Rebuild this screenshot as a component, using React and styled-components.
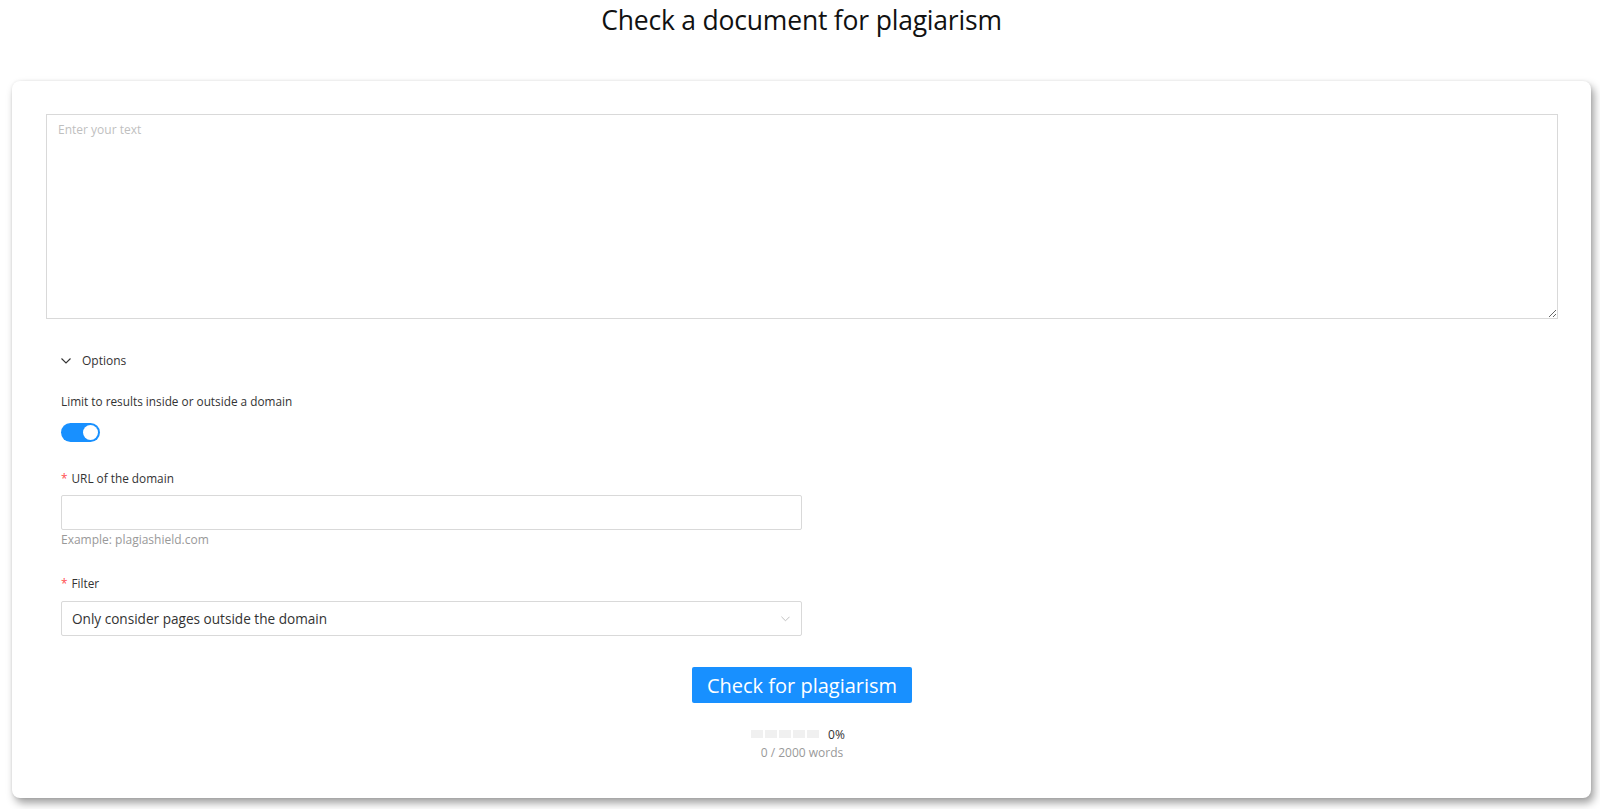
import React, { useState } from 'react';
import styled, { createGlobalStyle } from 'styled-components';

const GlobalStyle = createGlobalStyle`
  html, body {
    margin: 0;
    padding: 0;
    background: #ffffff;
    overflow: hidden;
    font-family: "Open Sans", "Noto Sans", "Liberation Sans", sans-serif;
  }
`;

const Page = styled.div`
  width: 100%;
  height: 809px;
  padding-left: 12px;
  box-sizing: border-box;
  overflow: hidden;
`;

const Title = styled.h1`
  margin: 0;
  box-sizing: border-box;
  width: 1579px;
  height: 81px;
  padding-top: 2px;
  text-align: center;
  font-size: 26.5px;
  line-height: 36px;
  font-weight: 500;
  color: #111;
  letter-spacing: -0.2px;
`;

const Card = styled.div`
  width: 1579px;
  height: 717px;
  background: #fff;
  border-radius: 8px;
  box-shadow: 3px 5px 8px rgba(0, 0, 0, 0.38), 0 0 3px rgba(0, 0, 0, 0.08);
  padding: 33px 33px 0 34px;
  box-sizing: border-box;
`;

const TextArea = styled.textarea`
  display: block;
  width: 100%;
  height: 205px;
  box-sizing: border-box;
  border: 1px solid #d9d9d9;
  padding: 6px 11px;
  font-family: inherit;
  font-size: 12px;
  color: #333;
  resize: vertical;
  outline: none;
  &::placeholder {
    color: #bfbfbf;
  }
`;

const Options = styled.div`
  padding: 0 15px;
`;

const Collapse = styled.div`
  display: flex;
  align-items: center;
  gap: 11px;
  margin-top: 34px;
  font-size: 12px;
  line-height: 16px;
  color: #333;
  height: 16px;
`;

const Label = styled.div`
  font-size: 11.8px;
  color: #333;
  margin-top: ${p => p.top}px;
  height: 16px;
  line-height: 16px;
`;

const Star = styled.span`
  color: #ff4d4f;
  margin-right: 4px;
`;

const Switch = styled.button`
  display: block;
  margin-top: 14px;
  width: 39px;
  height: 19px;
  border-radius: 10px;
  border: none;
  padding: 0;
  background: ${p => (p.on ? '#1890ff' : '#bfbfbf')};
  position: relative;
  cursor: pointer;
  &::after {
    content: "";
    position: absolute;
    top: 2px;
    left: ${p => (p.on ? '22px' : '2px')};
    width: 15px;
    height: 15px;
    border-radius: 50%;
    background: #fff;
  }
`;

const Field = styled.div`
  width: 741px;
  height: 35px;
  margin-top: ${p => p.top}px;
  border: 1px solid #d9d9d9;
  border-radius: 2px;
  box-sizing: border-box;
  display: flex;
  align-items: center;
  justify-content: space-between;
  padding: 0 11px 0 10px;
  font-size: 13.6px;
  color: #333;
`;

const Input = styled.input`
  border: none;
  outline: none;
  width: 100%;
  font-family: inherit;
  font-size: 13.6px;
  padding: 0;
`;

const Help = styled.div`
  margin-top: 2px;
  font-size: 12px;
  line-height: 16px;
  color: #999;
  height: 16px;
`;

const Footer = styled.div`
  display: flex;
  flex-direction: column;
  align-items: center;
  margin-top: 31px;
`;

const Button = styled.button`
  width: 220px;
  height: 36px;
  background: #1890ff;
  color: #fff;
  border: none;
  border-radius: 2px;
  font-family: inherit;
  font-size: 20px;
  cursor: pointer;
`;

const Progress = styled.div`
  display: flex;
  align-items: center;
  gap: 9px;
  height: 16px;
  margin-top: 23px;
  margin-right: 8px;
  font-size: 12px;
  color: #333;
`;

const Steps = styled.div`
  display: flex;
  gap: 2px;
`;

const Step = styled.span`
  width: 12px;
  height: 8px;
  background: #f0f0f0;
`;

const Words = styled.div`
  margin-top: 3px;
  font-size: 12px;
  line-height: 16px;
  color: #999;
`;

const Chevron = ({ color, w, h }) => (
  <svg width={w} height={h} viewBox="0 0 10 6">
    <path d="M0.5 0.5 L5 5 L9.5 0.5" fill="none" stroke={color} strokeWidth="1.1" />
  </svg>
);

export default function App() {
  const [on, setOn] = useState(true);
  return (
    <Page>
      <GlobalStyle />
      <Title>Check a document for plagiarism</Title>
      <Card>
        <TextArea placeholder="Enter your text" />
        <Options>
          <Collapse>
            <Chevron color="#333" w={10} h={6} />
            Options
          </Collapse>
          <Label top={24}>Limit to results inside or outside a domain</Label>
          <Switch on={on} onClick={() => setOn(!on)} />
          <Label top={28}><Star>*</Star>URL of the domain</Label>
          <Field top={9}><Input /></Field>
          <Help>Example: plagiashield.com</Help>
          <Label top={27}><Star>*</Star>Filter</Label>
          <Field top={10}>
            Only consider pages outside the domain
            <Chevron color="#bfbfbf" w={9} h={6} />
          </Field>
        </Options>
        <Footer>
          <Button>Check for plagiarism</Button>
          <Progress>
            <Steps>
              {[0, 1, 2, 3, 4].map(i => <Step key={i} />)}
            </Steps>
            0%
          </Progress>
          <Words>0 / 2000 words</Words>
        </Footer>
      </Card>
    </Page>
  );
}
